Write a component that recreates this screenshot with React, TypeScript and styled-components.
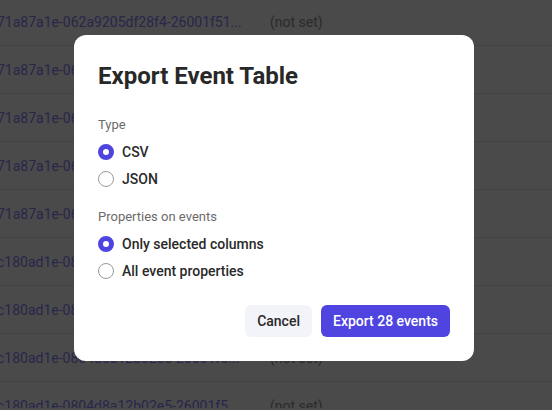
import React, { useState } from "react";
import styled, { createGlobalStyle } from "styled-components";

const GlobalStyle = createGlobalStyle`
    html, body {
        margin: 0;
        padding: 0;
        background: #ffffff;
        font-family: Roboto, "Noto Sans", sans-serif;
        overflow: hidden;
    }
`;

const Table = styled.div`
    width: 552px;
    height: 410px;
    margin-top: -2px;
    overflow: hidden;
`;

const Row = styled.div`
    height: 48px;
    display: grid;
    grid-template-columns: 270px 1fr;
    align-items: center;
    border-bottom: 1px solid #e4e4e4;
    box-sizing: border-box;
`;

const IdCell = styled.span`
    margin-left: -3px;
    font-size: 14px;
    color: #8a83ff;
    white-space: nowrap;
`;

const ValueCell = styled.span`
    font-size: 14px;
    color: #929292;
`;

const Backdrop = styled.div`
    position: fixed;
    inset: 0;
    background: rgba(0, 0, 0, 0.71);
    display: flex;
    align-items: flex-start;
    justify-content: flex-start;
    padding: 35px 0 0 74px;
    box-sizing: border-box;
`;

const Dialog = styled.div`
    width: 400px;
    background: #ffffff;
    border-radius: 12px;
    padding: 24px;
    box-sizing: border-box;
    display: flex;
    flex-direction: column;
`;

const Title = styled.h2`
    margin: 1px 0 25px;
    font-size: 24px;
    line-height: 32px;
    font-weight: 700;
    color: #282828;
`;

const Section = styled.div<{ $last?: boolean }>`
    display: flex;
    flex-direction: column;
    margin-bottom: ${(p) => (p.$last ? "21px" : "17px")};
`;

const Label = styled.div`
    font-size: 13px;
    line-height: 16px;
    color: #6b6b6b;
    margin-bottom: 5px;
`;

const Option = styled.label`
    height: 27px;
    display: flex;
    align-items: center;
    gap: 8px;
    cursor: pointer;
    font-size: 14px;
    font-weight: 500;
    color: #2a2a2a;
`;

const HiddenInput = styled.input`
    display: none;
`;

const Dot = styled.span<{ $checked: boolean }>`
    width: 16px;
    height: 16px;
    border-radius: 50%;
    box-sizing: border-box;
    flex-shrink: 0;
    border: ${(p) => (p.$checked ? "5px solid #4f44e0" : "1px solid #9a9a9a")};
    background: #ffffff;
`;

const Footer = styled.div`
    display: flex;
    justify-content: flex-end;
    gap: 9px;
`;

const Button = styled.button<{ $primary?: boolean }>`
    height: 32px;
    padding: 0 12px;
    border: none;
    border-radius: 6px;
    font-family: inherit;
    font-size: 14px;
    font-weight: 500;
    cursor: pointer;
    background: ${(p) => (p.$primary ? "#4f44e0" : "#f3f3fa")};
    color: ${(p) => (p.$primary ? "#ffffff" : "#2a2a2a")};
`;

const rows = [
    ...Array(5).fill("71a87a1e-062a9205df28f4-26001f51..."),
    ...Array(4).fill("c180ad1e-0804d8a12b02e5-26001f5..."),
];

const RadioGroup: React.FC<{
    name: string;
    options: string[];
    value: string;
    onChange: (v: string) => void;
}> = ({ name, options, value, onChange }) => (
    <>
        {options.map((opt) => (
            <Option key={opt}>
                <HiddenInput
                    type="radio"
                    name={name}
                    checked={value === opt}
                    onChange={() => onChange(opt)}
                />
                <Dot $checked={value === opt} />
                {opt}
            </Option>
        ))}
    </>
);

const App: React.FC = () => {
    const [format, setFormat] = useState("CSV");
    const [props, setProps] = useState("Only selected columns");

    return (
        <>
            <GlobalStyle />
            <Table>
                {rows.map((id, i) => (
                    <Row key={i}>
                        <IdCell>{id}</IdCell>
                        <ValueCell>(not set)</ValueCell>
                    </Row>
                ))}
            </Table>
            <Backdrop>
                <Dialog>
                    <Title>Export Event Table</Title>
                    <Section>
                        <Label>Type</Label>
                        <RadioGroup name="type" options={["CSV", "JSON"]} value={format} onChange={setFormat} />
                    </Section>
                    <Section $last>
                        <Label>Properties on events</Label>
                        <RadioGroup
                            name="props"
                            options={["Only selected columns", "All event properties"]}
                            value={props}
                            onChange={setProps}
                        />
                    </Section>
                    <Footer>
                        <Button>Cancel</Button>
                        <Button $primary>Export 28 events</Button>
                    </Footer>
                </Dialog>
            </Backdrop>
        </>
    );
};

export default App;
